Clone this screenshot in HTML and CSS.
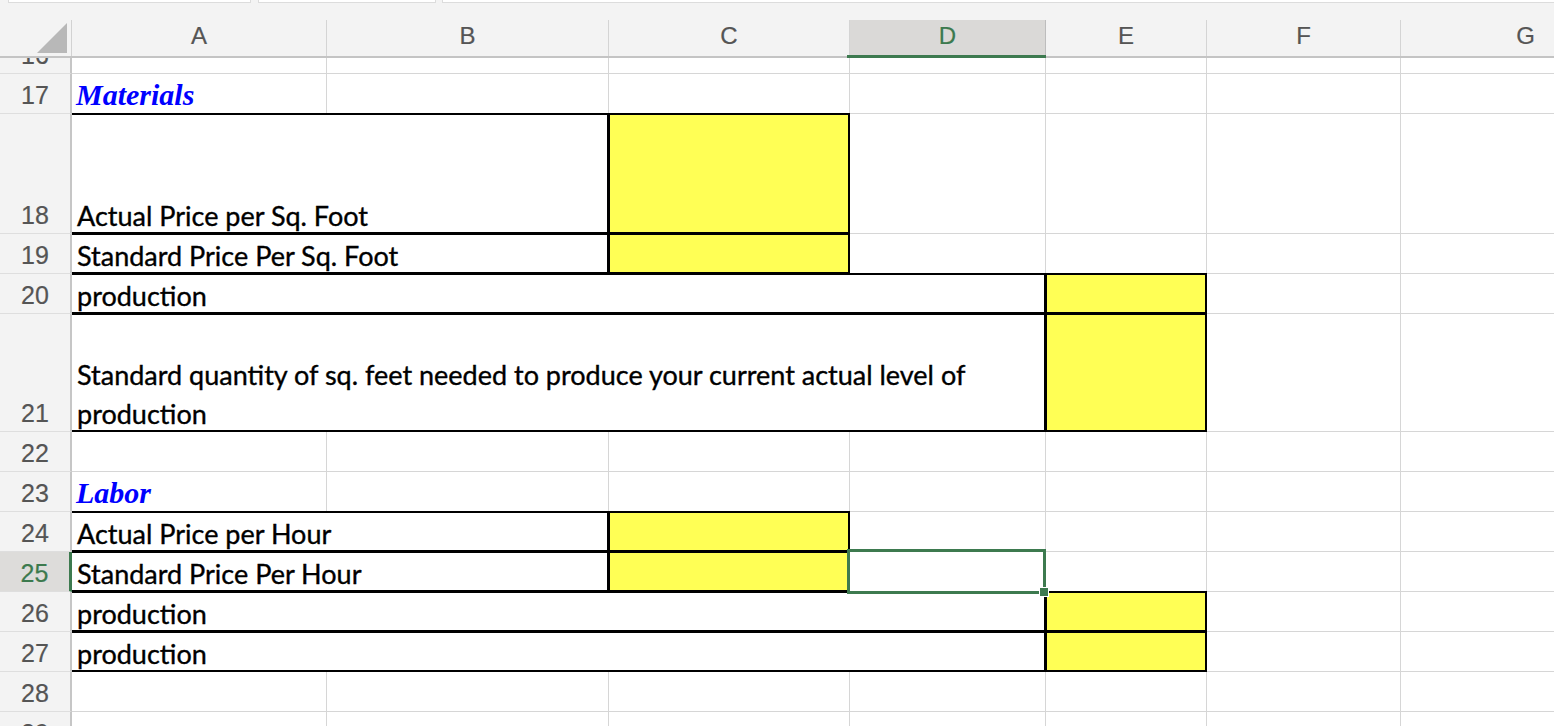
FILE: index.html
```html
<!DOCTYPE html>
<html lang="en">
<head>
<meta charset="utf-8">
<title>Materials and Labor variance sheet</title>
<link rel="stylesheet" href="styles.css">
</head>
<body>
<div class="app">
  <div class="toolbar">
    <div class="tb-box tb-1"></div>
    <div class="tb-box tb-2"></div>
    <div class="tb-box tb-3"></div>
  </div>
  <div class="colhead">
    <div class="corner"><span class="tri"></span></div>
    <div class="ch">A</div>
    <div class="ch">B</div>
    <div class="ch">C</div>
    <div class="ch ch-sel">D</div>
    <div class="ch">E</div>
    <div class="ch">F</div>
    <div class="ch">G</div>
  </div>
  <div class="viewport">
    <div class="sheet">
      <!-- 16 -->
      <div class="rh">16</div>
      <div class="c"></div><div class="c"></div><div class="c"></div><div class="c"></div><div class="c"></div><div class="c"></div><div class="c"></div>
      <!-- 17 -->
      <div class="rh">17</div>
      <div class="c hd">Materials</div><div class="c"></div><div class="c"></div><div class="c"></div><div class="c"></div><div class="c"></div><div class="c"></div>
      <!-- 18 -->
      <div class="rh">18</div>
      <div class="c bx a span2">Actual Price per Sq. Foot</div>
      <div class="c bx y"></div><div class="c"></div><div class="c"></div><div class="c"></div><div class="c"></div>
      <!-- 19 -->
      <div class="rh">19</div>
      <div class="c bx a span2">Standard Price Per Sq. Foot</div>
      <div class="c bx y"></div><div class="c"></div><div class="c"></div><div class="c"></div><div class="c"></div>
      <!-- 20 -->
      <div class="rh">20</div>
      <div class="c bx a span4">production</div>
      <div class="c bx y"></div><div class="c"></div><div class="c"></div>
      <!-- 21 -->
      <div class="rh">21</div>
      <div class="c bx a span4 wrap"><span class="wrap-text">Standard quantity of sq. feet needed to produce your current actual level of<br>production</span></div>
      <div class="c bx y"></div><div class="c"></div><div class="c"></div>
      <!-- 22 -->
      <div class="rh">22</div>
      <div class="c"></div><div class="c"></div><div class="c"></div><div class="c"></div><div class="c"></div><div class="c"></div><div class="c"></div>
      <!-- 23 -->
      <div class="rh">23</div>
      <div class="c hd">Labor</div><div class="c"></div><div class="c"></div><div class="c"></div><div class="c"></div><div class="c"></div><div class="c"></div>
      <!-- 24 -->
      <div class="rh">24</div>
      <div class="c bx a span2">Actual Price per Hour</div>
      <div class="c bx y"></div><div class="c"></div><div class="c"></div><div class="c"></div><div class="c"></div>
      <!-- 25 -->
      <div class="rh rh-sel">25</div>
      <div class="c bx a span2">Standard Price Per Hour</div>
      <div class="c bx y"></div><div class="c sel"></div><div class="c"></div><div class="c"></div><div class="c"></div>
      <!-- 26 -->
      <div class="rh">26</div>
      <div class="c bx a span4">production</div>
      <div class="c bx y"></div><div class="c"></div><div class="c"></div>
      <!-- 27 -->
      <div class="rh">27</div>
      <div class="c bx a span4">production</div>
      <div class="c bx y"></div><div class="c"></div><div class="c"></div>
      <!-- 28 -->
      <div class="rh">28</div>
      <div class="c"></div><div class="c"></div><div class="c"></div><div class="c"></div><div class="c"></div><div class="c"></div><div class="c"></div>
      <!-- 29 -->
      <div class="rh">29</div>
      <div class="c"></div><div class="c"></div><div class="c"></div><div class="c"></div><div class="c"></div><div class="c"></div><div class="c"></div>
    </div>
  </div>
</div>
</body>
</html>
```

FILE: styles.css
```css
html, body {
  margin: 0;
  padding: 0;
  background: #ffffff;
}

.app {
  width: 1554px;
  height: 726px;
  overflow: hidden;
  background: #ffffff;
}

/* top strip (formula bar remnants) */
.toolbar {
  height: 20px;
  background: #f3f3f3;
  display: flex;
  align-items: flex-start;
}

.tb-box {
  height: 2px;
  background: #ffffff;
  border: 1px solid #dcdcdc;
  border-top: 0;
  flex: none;
}

.tb-1 {
  margin-left: 8px;
  width: 241px;
}

.tb-2 {
  margin-left: 7px;
  width: 176px;
}

.tb-3 {
  margin-left: 6px;
  flex: 1;
  border-right: 0;
}

/* column headers */
.colhead {
  display: grid;
  grid-template-columns: 72px 255px 282px 241px 196px 161px 194px 250px;
  height: 38px;
  box-sizing: border-box;
  background: #f3f3f3;
  border-bottom: 2px solid #c4c4c4;
  width: 1651px;
}

.corner {
  border-right: 1px solid #d2d2d2;
  display: flex;
  align-items: flex-end;
  justify-content: flex-end;
  padding: 0 4px 3px 0;
}

.tri {
  width: 0;
  height: 0;
  border-left: 30px solid transparent;
  border-bottom: 30px solid #b8b8b8;
}

.ch {
  border-right: 1px solid #d4d4d4;
  display: flex;
  align-items: center;
  justify-content: center;
  padding-bottom: 4px;
  font-family: "Liberation Sans", Arial, sans-serif;
  font-size: 24px;
  line-height: 1;
  color: #555555;
  -webkit-text-stroke: 0.2px #555555;
  position: relative;
}

.ch-sel {
  background: #dad9d7;
  color: #3c7a4e;
  -webkit-text-stroke: 0.2px #3c7a4e;
  border-right-color: #bdbdbd;
}

.ch-sel::after {
  content: "";
  position: absolute;
  left: -3px;
  right: -1px;
  bottom: -2px;
  height: 3px;
  background: #3d7a4f;
}

/* sheet body */
.viewport {
  height: 668px;
  overflow: hidden;
}

.sheet {
  display: grid;
  grid-template-columns: 72px 255px 282px 241px 196px 161px 194px 250px;
  grid-template-rows: 40px 40px 120px 40px 40px 118px repeat(8, 40px);
  width: 1651px;
  margin-top: -24px;
}

.rh {
  background: #f3f3f3;
  border-right: 2px solid #c6c6c6;
  border-bottom: 1px solid #dedede;
  box-sizing: border-box;
  display: flex;
  align-items: flex-end;
  justify-content: center;
  padding-bottom: 5px;
  font-family: "Liberation Sans", Arial, sans-serif;
  font-size: 25px;
  line-height: 1;
  color: #555555;
  -webkit-text-stroke: 0.2px #555555;
}

.rh-sel {
  background: #dddcda;
  color: #3c7a4e;
  -webkit-text-stroke: 0.2px #3c7a4e;
  border-right: 3px solid #3d7a4f;
}

.c {
  position: relative;
  box-sizing: border-box;
  border-right: 1px solid #d6d6d6;
  border-bottom: 1px solid #d6d6d6;
  display: flex;
  align-items: flex-end;
  padding-left: 5px;
  min-width: 0;
  white-space: nowrap;
  font-family: Lato, "Open Sans", sans-serif;
  font-size: 27px;
  line-height: 35px;
  color: #000000;
  -webkit-text-stroke: 0.35px #000000;
}

.wrap {
  line-height: 39px;
}

.wrap-text {
  margin-bottom: -2px;
}

.span2 {
  grid-column: span 2;
}

.span4 {
  grid-column: span 4;
}

.y {
  background: #ffff55;
}

.bx::after {
  content: "";
  position: absolute;
  z-index: 1;
  left: -1px;
  top: -1px;
  right: -1px;
  bottom: -1px;
  border: 2px solid #000000;
  pointer-events: none;
}

.a::after {
  left: 0;
  border-left-width: 0;
}

.hd {
  font-family: "Liberation Serif", "Times New Roman", serif;
  font-style: italic;
  font-weight: bold;
  font-size: 30px;
  line-height: 36px;
  color: #0000ff;
  -webkit-text-stroke: 0;
  padding-left: 4px;
}

.sel::after {
  content: "";
  position: absolute;
  z-index: 2;
  left: -3px;
  top: -3px;
  right: -1px;
  bottom: -3px;
  border: 3px solid #3d7a4f;
}

.sel::before {
  content: "";
  position: absolute;
  z-index: 3;
  right: -4px;
  bottom: -6px;
  width: 8px;
  height: 8px;
  background: #3d7a4f;
  border: 1px solid #ffffff;
}
```
